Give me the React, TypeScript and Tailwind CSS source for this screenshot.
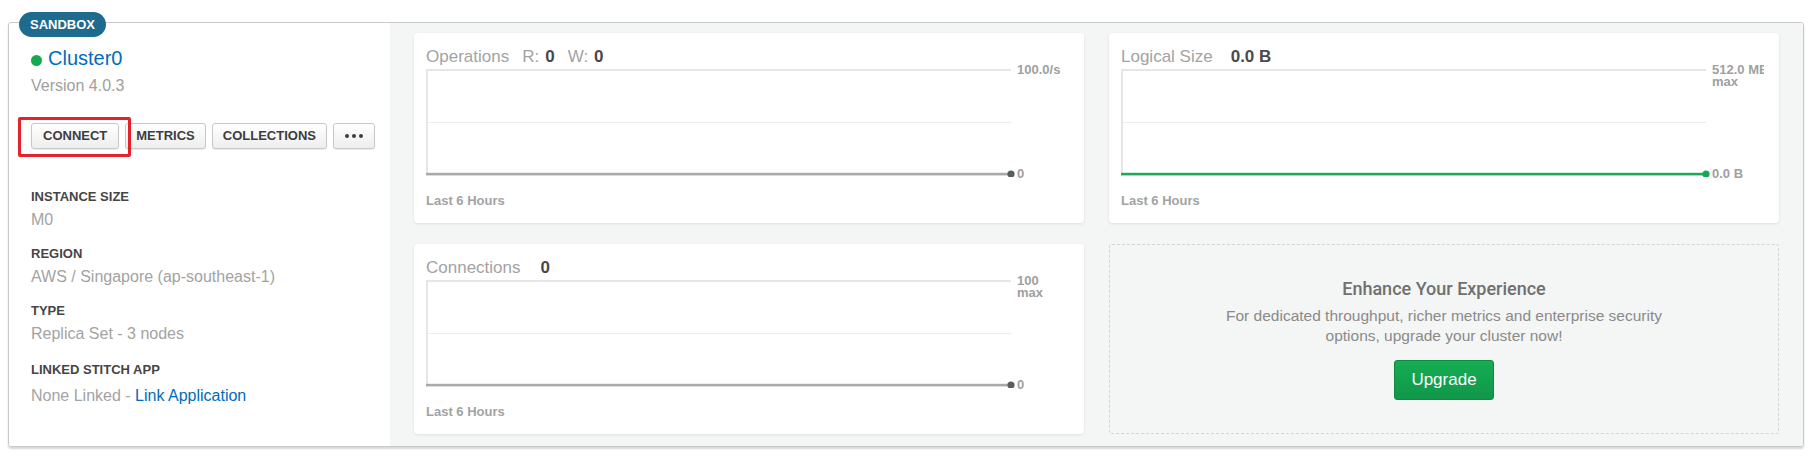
import React from "react";

function Btn({ children, className = "" }: { children: React.ReactNode; className?: string }) {
  return (
    <button
      className={
        "h-[26px] px-[10px] rounded-[3px] border border-[#c8c8c8] bg-gradient-to-b from-white to-[#eeeeee] shadow-[0_1px_1px_rgba(0,0,0,0.08)] text-[13px] leading-[16px] font-bold text-[#3d3d3d] flex items-center " +
        className
      }
    >
      {children}
    </button>
  );
}

function Chart({ green = false }: { green?: boolean }) {
  const line = green ? "#1aa956" : "#a9a9a9";
  const dot = green ? "#13aa52" : "#5b5e61";
  return (
    <svg width="591" height="108" viewBox="0 0 591 108" className="block shrink-0">
      <rect x="0" y="0" width="585" height="2" fill="#e6e6e6" />
      <rect x="0" y="0" width="2" height="105" fill="#e6e6e6" />
      <rect x="2" y="53" width="583" height="1" fill="#ececec" />
      <rect x="0" y="103.8" width="582" height="2.6" fill={line} />
      <circle cx="585" cy="105" r="3.6" fill={dot} />
    </svg>
  );
}

function ChartCard({
  title,
  topLabel,
  bottomLabel,
  green,
}: {
  title: React.ReactNode;
  topLabel: React.ReactNode;
  bottomLabel: string;
  green?: boolean;
}) {
  return (
    <div className="h-[190px] bg-white rounded-[4px] shadow-[0_1px_3px_rgba(0,0,0,0.09)] pl-[12px] pr-[15px] pt-[14px]">
      <div className="flex items-baseline h-[20px] text-[17px] leading-[20px] whitespace-nowrap">{title}</div>
      <div className="mt-[2px] flex">
        <Chart green={green} />
        <div className="w-[52px] -mt-[6px] h-[117px] flex flex-col justify-between overflow-hidden whitespace-nowrap text-[13px] leading-[13px] font-bold text-[#a0a0a0]">
          <div>{topLabel}</div>
          <div>{bottomLabel}</div>
        </div>
      </div>
      <div className="mt-[13px] text-[13px] leading-[16px] font-bold text-[#a3a3a3]">Last 6 Hours</div>
    </div>
  );
}

function Info({ label, children, className = "", valueClass = "mt-[5px]" }: { label: string; children: React.ReactNode; className?: string; valueClass?: string }) {
  return (
    <div className={className}>
      <div className="text-[13px] leading-[16px] font-bold text-[#454545]">{label}</div>
      <div className={"text-[16px] leading-[20px] text-[#a3a3a3] " + valueClass}>{children}</div>
    </div>
  );
}

export default function App() {
  return (
    <div className="w-[1812px] h-[458px] bg-white pt-[22px] px-[8px] font-['Liberation_Sans',Arial,sans-serif]">
      <div className="relative flex h-[425px] border border-[#c9c9c9] rounded-[3px] shadow-[0_2px_2px_rgba(0,0,0,0.16)]">
        <span className="absolute left-[10px] -top-[11px] h-[25px] px-[11px] rounded-full bg-[#1f6b8d] text-white text-[13px] font-bold leading-[25px] z-10">
          SANDBOX
        </span>

        <div className="w-[381px] shrink-0 bg-white pl-[22px] pt-[23px] rounded-l-[3px]">
          <div className="flex items-center h-[24px]">
            <span className="w-[11px] h-[11px] rounded-full bg-[#13aa52] mr-[6px] mt-[4px]" />
            <span className="text-[20px] leading-[24px] text-[#006cbc]">Cluster0</span>
          </div>
          <div className="mt-[6px] text-[16px] leading-[20px] text-[#a0a0a0]">Version 4.0.3</div>

          <div className="mt-[27px] flex items-center gap-[6px]">
            <div className="relative">
              <Btn className="px-[11px]">CONNECT</Btn>
              <span className="absolute -left-[13px] -top-[6px] -right-[12px] -bottom-[8px] border-[3.5px] border-[#e5222b] rounded-[2px] z-10" />
            </div>
            <Btn>METRICS</Btn>
            <Btn>COLLECTIONS</Btn>
            <Btn className="w-[42px] justify-center gap-[3px]">
              <span className="w-[4px] h-[4px] rounded-full bg-[#3d3d3d]" />
              <span className="w-[4px] h-[4px] rounded-full bg-[#3d3d3d]" />
              <span className="w-[4px] h-[4px] rounded-full bg-[#3d3d3d]" />
            </Btn>
          </div>

          <Info label="INSTANCE SIZE" className="mt-[40px]">M0</Info>
          <Info label="REGION" className="mt-[16px]">AWS / Singapore (ap-southeast-1)</Info>
          <Info label="TYPE" className="mt-[16px]">Replica Set - 3 nodes</Info>
          <Info label="LINKED STITCH APP" className="mt-[18px]" valueClass="mt-[8px]">
            None Linked - <span className="text-[#006cbc]">Link Application</span>
          </Info>
        </div>

        <div className="flex-1 bg-[#f4f5f5] px-[24px] pt-[10px] pb-[12px] grid grid-cols-2 gap-x-[25px] gap-y-[21px] content-start rounded-r-[3px]">
          <ChartCard
            title={
              <>
                <span className="text-[#a3a3a3]">Operations</span>
                <span className="ml-[13px] text-[#a3a3a3]">R:</span>
                <span className="ml-[6px] font-bold text-[#484848]">0</span>
                <span className="ml-[13px] text-[#a3a3a3]">W:</span>
                <span className="ml-[6px] font-bold text-[#484848]">0</span>
              </>
            }
            topLabel="100.0/s"
            bottomLabel="0"
          />
          <ChartCard
            green
            title={
              <>
                <span className="text-[#a3a3a3]">Logical Size</span>
                <span className="ml-[18px] font-bold text-[#4a4a4a]">0.0 B</span>
              </>
            }
            topLabel={
              <>
                <div>512.0 MB</div>
                <div className="leading-[11px]">max</div>
              </>
            }
            bottomLabel="0.0 B"
          />
          <ChartCard
            title={
              <>
                <span className="text-[#a3a3a3]">Connections</span>
                <span className="ml-[20px] font-bold text-[#484848]">0</span>
              </>
            }
            topLabel={
              <>
                <div>100</div>
                <div className="leading-[11px]">max</div>
              </>
            }
            bottomLabel="0"
          />
          <div className="h-[190px] border border-dashed border-[#d4d4d4] rounded-[3px] flex flex-col items-center justify-center text-center">
            <div className="text-[18px] leading-[22px] font-medium text-[#707070] font-['Roboto',Arial,sans-serif]">Enhance Your Experience</div>
            <div className="mt-[6px] max-w-[460px] text-[15.5px] leading-[20px] text-[#8a8a8a]">
              For dedicated throughput, richer metrics and enterprise security options, upgrade your cluster now!
            </div>
            <button className="mt-[14px] h-[40px] px-[16px] rounded-[3px] border border-[#0f8a41] bg-gradient-to-b from-[#15ad53] to-[#11974a] text-white text-[17px] leading-[20px]">
              Upgrade
            </button>
          </div>
        </div>
      </div>
    </div>
  );
}
